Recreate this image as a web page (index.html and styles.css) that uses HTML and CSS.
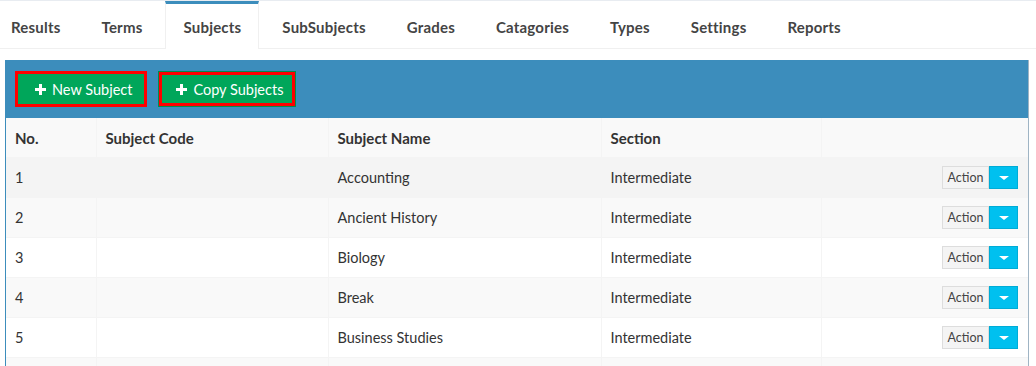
FILE: index.html
```html
<!DOCTYPE html>
<html lang="en">
<head>
    <meta charset="UTF-8">
    <title>Subjects</title>
    <link rel="stylesheet" href="styles.css">
</head>
<body>
    <div class="tabs">
        <ul>
            <li><a href="#">Results</a></li>
            <li><a href="#">Terms</a></li>
            <li class="active"><a href="#">Subjects</a></li>
            <li><a href="#">SubSubjects</a></li>
            <li><a href="#">Grades</a></li>
            <li><a href="#">Catagories</a></li>
            <li><a href="#">Types</a></li>
            <li><a href="#">Settings</a></li>
            <li><a href="#">Reports</a></li>
        </ul>
    </div>

    <div class="box">
        <div class="box-header">
            <button class="btn">
                <svg class="plus" width="11" height="11" viewBox="0 0 11 11"><path d="M4 0h3v4h4v3H7v4H4V7H0V4h4z" fill="#fff"/></svg>
                New Subject
            </button>
            <button class="btn btn-outline">
                <svg class="plus" width="11" height="11" viewBox="0 0 11 11"><path d="M4 0h3v4h4v3H7v4H4V7H0V4h4z" fill="#fff"/></svg>
                Copy Subjects
            </button>
        </div>
        <table class="grid">
            <colgroup>
                <col class="c-no">
                <col class="c-code">
                <col class="c-name">
                <col class="c-section">
                <col>
            </colgroup>
            <tr class="head">
                <th>No.</th>
                <th>Subject Code</th>
                <th>Subject Name</th>
                <th>Section</th>
                <th></th>
            </tr>
            <tr class="hover">
                <td>1</td><td></td><td>Accounting</td><td>Intermediate</td>
                <td class="act"><span class="grp"><span class="act-btn">Action</span><span class="caret-btn"><i></i></span></span></td>
            </tr>
            <tr class="odd">
                <td>2</td><td></td><td>Ancient History</td><td>Intermediate</td>
                <td class="act"><span class="grp"><span class="act-btn">Action</span><span class="caret-btn"><i></i></span></span></td>
            </tr>
            <tr>
                <td>3</td><td></td><td>Biology</td><td>Intermediate</td>
                <td class="act"><span class="grp"><span class="act-btn">Action</span><span class="caret-btn"><i></i></span></span></td>
            </tr>
            <tr class="odd">
                <td>4</td><td></td><td>Break</td><td>Intermediate</td>
                <td class="act"><span class="grp"><span class="act-btn">Action</span><span class="caret-btn"><i></i></span></span></td>
            </tr>
            <tr>
                <td>5</td><td></td><td>Business Studies</td><td>Intermediate</td>
                <td class="act"><span class="grp"><span class="act-btn">Action</span><span class="caret-btn"><i></i></span></span></td>
            </tr>
            <tr class="odd">
                <td></td><td></td><td></td><td></td><td></td>
            </tr>
        </table>
    </div>
</body>
</html>
```

FILE: styles.css
```css
body {
    font-family: Lato, "Open Sans", sans-serif;
    font-size: 14.5px;
    color: #333;
    margin: 0;
    padding: 0;
    background: #fff;
    overflow: hidden;
}
.tabs {
    border-top: 1px solid #e8ecf1;
}
.tabs ul {
    list-style: none;
    margin: 0 0 0 -7px;
    padding: 0;
    display: flex;
    border-bottom: 1px solid #f0f0f0;
    height: 47px;
}
.tabs li {
    margin-right: 5px;
}
.tabs li a {
    display: block;
    height: 44px;
    line-height: 47px;
    padding: 0 17px;
    color: #444;
    font-size: 15px;
    font-weight: bold;
    letter-spacing: 0.2px;
    text-decoration: none;
    border-top: 3px solid transparent;
    border-left: 1px solid transparent;
    border-right: 1px solid transparent;
}
.tabs li.active a {
    border-top-color: #3c8dbc;
    border-left-color: #f0f0f0;
    border-right-color: #f0f0f0;
    background: #fff;
    height: 45px;
}
.box {
    margin: 11px 7px 0 5px;
    border-left: 1px solid #3c8dbc;
    border-right: 1px solid #9fb4c4;
}
.box-header {
    background: #3c8dbc;
    padding: 11px 9px;
    display: flex;
    gap: 12px;
}
.btn {
    font-family: inherit;
    font-size: 14.5px;
    color: #fff;
    background: #00a65a;
    border: 3px solid #ff0000;
    height: 36px;
    padding: 0 12px 0 17px;
    display: flex;
    align-items: center;
    gap: 6px;
    cursor: pointer;
}
.btn-outline {
    outline: 1px solid #008d4c;
    margin-top: 1px;
    height: 34px;
    padding: 0 9px 0 14px;
}
.grid {
    width: 100%;
    border-collapse: collapse;
}
.c-no { width: 90px; }
.c-code { width: 232px; }
.c-name { width: 273px; }
.c-section { width: 220px; }
.grid th,
.grid td {
    height: 39px;
    padding: 0 9px;
    text-align: left;
    border: 1px solid #f4f4f4;
    border-top: 0;
}
.grid th {
    font-size: 15px;
}
.grid th:first-child,
.grid td:first-child {
    border-left: 0;
}
.grid th:last-child,
.grid td:last-child {
    border-right: 0;
}
.head {
    background: #f9f9f9;
}
.odd {
    background: #f9f9f9;
}
.hover {
    background: #f4f4f4;
}
.grid .act {
    text-align: right;
    padding-right: 10px;
}
.grp {
    display: inline-flex;
    vertical-align: middle;
}
.act-btn {
    font-size: 12.5px;
    color: #444;
    background: #f4f4f4;
    border: 1px solid #ddd;
    height: 21px;
    line-height: 21px;
    width: 45px;
    text-align: center;
}
.caret-btn {
    background: #00c0ef;
    border: 1px solid #00acd6;
    width: 27px;
    height: 21px;
    display: flex;
    align-items: center;
    justify-content: center;
}
.caret-btn i {
    width: 0;
    height: 0;
    border-left: 5px solid transparent;
    border-right: 5px solid transparent;
    border-top: 4px solid #fff;
}
```
